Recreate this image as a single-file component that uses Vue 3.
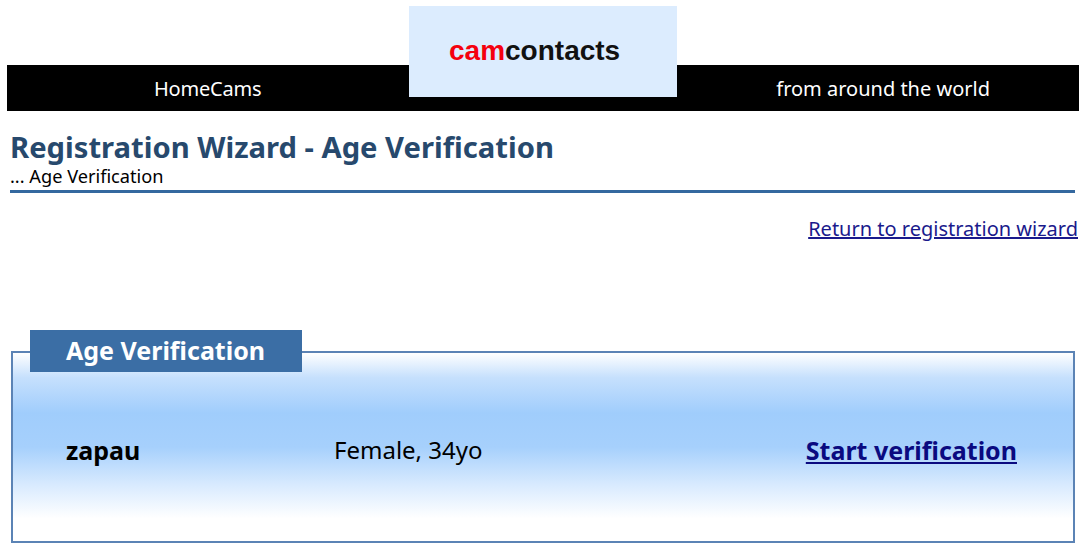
<template>
  <div class="page">
    <header class="header">
      <div class="logo"><span class="cam">cam</span>contacts</div>
      <nav class="bar">
        <div class="bar-left">HomeCams</div>
        <div class="bar-right">from around the world</div>
      </nav>
    </header>

    <section class="heading">
      <h1>Registration Wizard - Age Verification</h1>
      <p>... Age Verification</p>
    </section>

    <div class="return">
      <a href="#">Return to registration wizard</a>
    </div>

    <section class="panel">
      <h2 class="tab">Age Verification</h2>
      <div class="row">
        <strong class="name">{{ user.name }}</strong>
        <span class="info">{{ user.info }}</span>
        <a class="start" href="#">Start verification</a>
      </div>
    </section>
  </div>
</template>

<script setup>
const user = {
  name: 'zapau',
  info: 'Female, 34yo'
}
</script>

<style>
html, body {
  margin: 0;
  background: #fff;
}
</style>

<style scoped>
.page {
  width: 1084px;
  height: 559px;
  overflow: hidden;
  font-family: "Noto Sans", sans-serif;
  color: #000;
}
.header {
  position: relative;
  padding: 65px 5px 0 7px;
}
.logo {
  position: absolute;
  left: 409px;
  top: 6px;
  width: 268px;
  height: 91px;
  box-sizing: border-box;
  padding: 30px 0 0 40px;
  background: #dcecfe;
  font-family: "Liberation Sans", sans-serif;
  font-size: 28px;
  line-height: 30px;
  font-weight: bold;
  color: #111;
}
.cam {
  color: #f5000f;
}
.bar {
  display: flex;
  height: 46px;
  background: #000;
  color: #fff;
  font-size: 20px;
  line-height: 48px;
}
.bar-left {
  margin-left: 147px;
  letter-spacing: -0.2px;
}
.bar-right {
  margin-left: auto;
  margin-right: 89px;
}
.heading {
  margin: 18px 9px 0 10px;
  border-bottom: 3px solid #34689f;
  height: 61px;
}
.heading h1 {
  margin: 0;
  font-size: 29.2px;
  line-height: 36px;
  font-weight: bold;
  color: #27496d;
}
.heading p {
  margin: 0;
  font-size: 18.2px;
  line-height: 22px;
}
.return {
  margin: 22px 6px 0 0;
  text-align: right;
  font-size: 20px;
  line-height: 28px;
}
.return a {
  color: #1a1a8c;
}
.panel {
  margin: 108px 9px 0 11px;
  height: 192px;
  box-sizing: border-box;
  border: 2px solid #5b83b5;
  background: linear-gradient(to bottom, #fff 0%, #c6e0fd 13%, #a0cdfc 32%, #a6d0fc 50%, #d8eafe 70%, #fff 88%);
}
.tab {
  width: 272px;
  height: 42px;
  box-sizing: border-box;
  margin: -23px 0 0 17px;
  padding-left: 36px;
  background: #3b6ea5;
  color: #fff;
  font-size: 25px;
  line-height: 41px;
  font-weight: bold;
}
.row {
  display: flex;
  align-items: center;
  margin-top: 63px;
  padding: 0 56px 0 53px;
  font-size: 24px;
  line-height: 30px;
}
.name {
  width: 268px;
  font-size: 25px;
}
.start {
  margin-left: auto;
  font-size: 25px;
  font-weight: bold;
  color: #0a0a80;
}
</style>
